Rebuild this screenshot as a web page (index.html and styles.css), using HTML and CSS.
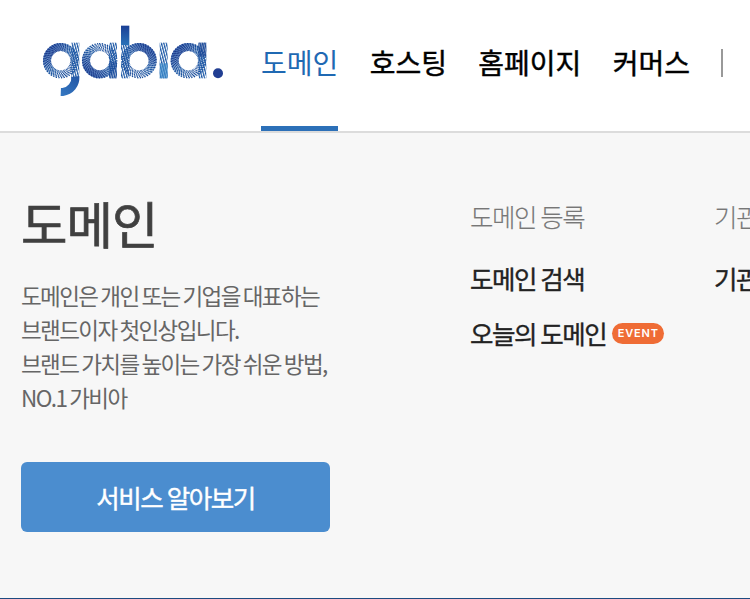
FILE: index.html
```
<!DOCTYPE html>
<html lang="ko">
<head>
<meta charset="utf-8">
<title>가비아</title>
<link rel="stylesheet" href="styles.css">
</head>
<body>
<header class="header">
  <a class="logo" aria-label="gabia">
    <svg width="182" height="73" viewBox="36 30 546 219">
      <defs>
        <linearGradient id="ink" x1="0" y1="0" x2="1" y2="1">
          <stop offset="0" stop-color="#1c2c80"/><stop offset=".5" stop-color="#17529f"/><stop offset="1" stop-color="#1c4c9a"/>
        </linearGradient>
        <linearGradient id="solid" x1="0" y1="0" x2="1" y2="1">
          <stop offset=".1" stop-color="#3465b0" stop-opacity=".9"/><stop offset=".75" stop-color="#2a6cb5" stop-opacity="0"/>
        </linearGradient>
        <linearGradient id="stem" x1="0" y1="0" x2="0" y2="1">
          <stop offset="0" stop-color="#1a3f95"/><stop offset="1" stop-color="#2a72b8"/>
        </linearGradient>
        <linearGradient id="tail" x1="1" y1="0" x2="0" y2="1">
          <stop offset="0" stop-color="#1c4c9d"/><stop offset="1" stop-color="#3a80c8"/>
        </linearGradient>
        <pattern id="hatch" width="7" height="7" patternUnits="userSpaceOnUse" patternTransform="rotate(-15)">
          <rect width="3.8" height="7" fill="#1a57a5"/>
        </pattern>
        <g id="ring" fill="none" stroke="url(#ink)" stroke-width="4.4">
          <circle r="41" stroke="url(#solid)" stroke-width="24"/>
          <circle r="31" pathLength="40" stroke-dasharray=".5 .5"/>
          <circle r="35" pathLength="40" stroke-dasharray=".5 .5" stroke-dashoffset=".4"/>
          <circle r="39" pathLength="40" stroke-dasharray=".5 .5" stroke-dashoffset=".76"/>
          <circle r="43" pathLength="40" stroke-dasharray=".5 .5" stroke-dashoffset="1.1"/>
          <circle r="47" pathLength="40" stroke-dasharray=".5 .5" stroke-dashoffset="1.4"/>
          <circle r="51" pathLength="40" stroke-dasharray=".5 .5" stroke-dashoffset="1.66"/>
        </g>
      </defs>
      <use href="#ring" transform="translate(92 137)"/>
      <rect x="124" y="83" width="24" height="107" fill="url(#hatch)"/>
      <circle cx="94" cy="189" r="42" fill="none" stroke="url(#tail)" stroke-width="24" pathLength="360" stroke-dasharray="98 262" transform="rotate(-6 94 189)"/>
      <use href="#ring" transform="translate(209 137) rotate(-95)"/>
      <rect x="237" y="83" width="24" height="107" fill="url(#hatch)"/>
      <rect x="237" y="140" width="24" height="50" fill="#1d4697" opacity=".45"/>
      <rect x="273" y="32" width="25" height="58" fill="url(#stem)"/>
      <rect x="273" y="90" width="25" height="100" fill="url(#hatch)"/>
      <use href="#ring" transform="translate(327 137) rotate(80)"/>
      <rect x="389" y="83" width="24" height="107" fill="url(#hatch)"/>
      <rect x="389" y="145" width="24" height="45" fill="#3c8acb" opacity=".7"/>
      <use href="#ring" transform="translate(475 137)"/>
      <rect x="505" y="83" width="24" height="107" fill="url(#hatch)"/>
      <rect x="505" y="83" width="24" height="42" fill="#1c418f" opacity=".55"/>
      <circle cx="564" cy="175" r="15" fill="#213e92"/>
    </svg>
  </a>
  <nav class="nav">
    <a class="nav-item active">도메인</a>
    <a class="nav-item">호스팅</a>
    <a class="nav-item">홈페이지</a>
    <a class="nav-item">커머스</a>
    <span class="divider"></span>
  </nav>
</header>
<main class="panel">
  <section class="intro">
    <h1>도메인</h1>
    <p>도메인은 개인 또는 기업을 대표하는<br>브랜드이자 첫인상입니다.<br>브랜드 가치를 높이는 가장 쉬운 방법,<br>NO.1 가비아</p>
    <a class="button">서비스 알아보기</a>
  </section>
  <section class="column">
    <h2>도메인 등록</h2>
    <a class="link">도메인 검색</a>
    <a class="link">오늘의 도메인<span class="badge">EVENT</span></a>
  </section>
  <section class="column last">
    <h2>기관</h2>
    <a class="link">기관</a>
  </section>
</main>
</body>
</html>
```
FILE: styles.css
```
* { box-sizing: border-box; }
body {
  margin: 0;
  width: 750px;
  height: 599px;
  overflow: hidden;
  display: flex;
  flex-direction: column;
  background: #f7f7f7;
  font-family: "Noto Sans CJK KR", sans-serif;
}
.header {
  flex: none;
  display: flex;
  height: 133px;
  padding-left: 42px;
  background: #fff;
  border-bottom: 2px solid #dcdcdc;
}
.logo { width: 219px; padding-top: 25px; }
.logo svg { display: block; }
.nav { display: flex; gap: 31.4px; white-space: nowrap; }
.nav-item {
  height: 131px;
  padding-top: 42px;
  font-size: 28px;
  font-weight: 400;
  line-height: 40px;
  color: #000;
  -webkit-text-stroke: .45px #000;
}
.nav-item.active {
  color: #1f69b3;
  border-bottom: 5px solid #2c70b8;
  -webkit-text-stroke: 0;
}
.divider { width: 2px; height: 28px; margin-top: 49px; background: #999; }
.panel {
  flex: 1;
  display: flex;
  padding: 58px 0 0 21px;
  border-bottom: 1px solid #1d4b80;
}
.intro { flex: none; width: 449px; }
h1 {
  margin: 0;
  font-size: 50.5px;
  font-weight: 400;
  line-height: 62px;
  letter-spacing: -1px;
  color: #404040;
  -webkit-text-stroke: .7px #404040;
}
p {
  margin: 25px 0 0;
  font-size: 22.5px;
  line-height: 34px;
  letter-spacing: -1.6px;
  word-spacing: -1.8px;
  color: #666;
  white-space: nowrap;
}
.button {
  display: block;
  width: 309px;
  height: 70px;
  margin-top: 48px;
  border-radius: 6px;
  background: #4b8dcf;
  color: #fff;
  font-size: 25.5px;
  font-weight: 400;
  line-height: 69px;
  letter-spacing: -1.5px;
  word-spacing: -1px;
  text-align: center;
  -webkit-text-stroke: .4px #fff;
}
.column { flex: none; width: 244px; white-space: nowrap; }
.column.last { flex: 1; width: auto; min-width: 0; overflow: hidden; }
h2 {
  margin: 7px 0 25px;
  font-size: 25.5px;
  font-weight: 300;
  line-height: 36px;
  letter-spacing: -1.46px;
  word-spacing: -1.4px;
  color: #777;
  -webkit-text-stroke: .15px #777;
}
.link {
  display: flex;
  align-items: center;
  height: 36px;
  margin-bottom: 19px;
  font-size: 25.5px;
  font-weight: 400;
  letter-spacing: -1.46px;
  word-spacing: -1.4px;
  color: #222;
  -webkit-text-stroke: .35px #222;
}
.badge {
  width: 52px;
  height: 21px;
  margin: 3px 0 0 6px;
  border-radius: 11px;
  background: #ef6c35;
  color: #fff;
  font: 600 11px/21px Inter, sans-serif;
  letter-spacing: .8px;
  text-align: center;
  -webkit-text-stroke: 0;
}
```
